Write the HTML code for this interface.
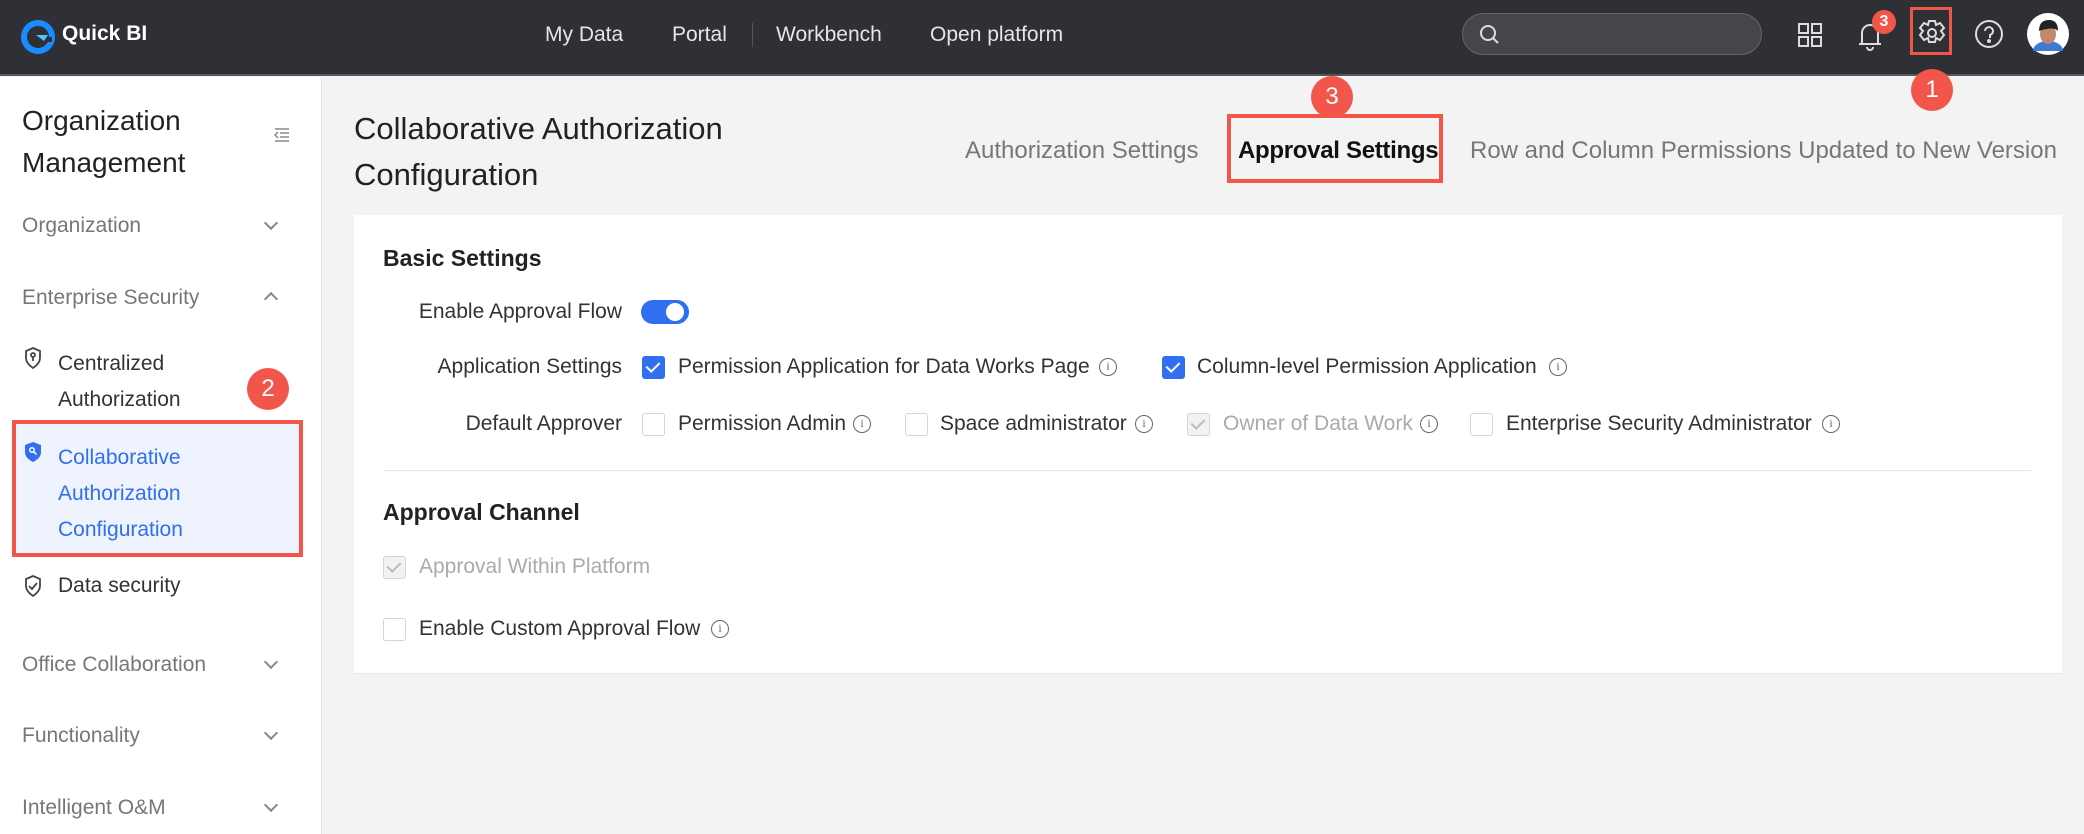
<!DOCTYPE html>
<html><head><meta charset="utf-8"><style>
*{margin:0;padding:0;box-sizing:border-box}
body{width:2084px;height:834px;overflow:hidden;background:#f3f3f3;font-family:"Liberation Sans",sans-serif;position:relative;color:#333}
.a{position:absolute;white-space:nowrap}
.hdr{position:absolute;left:0;top:0;width:2084px;height:76px;background:#2f3035;border-bottom:2px solid #55565a}
.nav{color:#e6e6e6;font-size:21px;top:23px}
.side{position:absolute;left:0;top:77px;width:322px;height:757px;background:#fff;border-right:1px solid #e2e2e2}
.si{font-size:21px;color:#777}
.sb{font-size:21px;color:#333}
.chev{width:10px;height:10px;border-right:2px solid #888;border-bottom:2px solid #888}
.badge{border-radius:50%;background:#f2564a;color:#fff;font-size:24px;text-align:center}
.f{font-size:21px;color:#333}
.cb{width:23px;height:23px;border:1.5px solid #d5d5d5;border-radius:3px;background:#fff}
.cb.on{background:#2f6ff0;border-color:#2f6ff0}
.cb.on::after,.cb.dis::after{content:"";position:absolute;left:6px;top:2px;width:6px;height:11px;border-right:2.5px solid #fff;border-bottom:2.5px solid #fff;transform:rotate(45deg)}
.cb.dis{background:#f2f2f2}
.cb.dis::after{border-color:#bbb}
.info{width:18px;height:18px;border:1.5px solid #666;border-radius:50%;font-size:12px;line-height:15px;text-align:center;color:#666;font-family:"Liberation Serif",serif}
</style></head><body>
<div class="hdr"></div>
<svg class="a" style="left:21px;top:20px" width="34" height="34" viewBox="0 0 34 34"><circle cx="17" cy="17" r="14" fill="none" stroke="#1a8cff" stroke-width="6"/><path d="M17 17h14v5h-9z" fill="#2f3035"/><path d="M15 15l12 0-4 6z" fill="#4fc3ff"/></svg>
<div class="a" style="left:62px;top:22px;color:#fff;font-size:21px;font-weight:bold">Quick BI</div>
<div class="a nav" style="left:545px">My Data</div>
<div class="a nav" style="left:672px">Portal</div>
<div class="a" style="left:752px;top:23px;width:1px;height:24px;background:#555"></div>
<div class="a nav" style="left:776px">Workbench</div>
<div class="a nav" style="left:930px">Open platform</div>
<div class="a" style="left:1462px;top:13px;width:300px;height:42px;border-radius:21px;background:#45464b;border:1px solid #666"></div>
<svg class="a" style="left:1478px;top:23px" width="24" height="24" viewBox="0 0 24 24" fill="none" stroke="#ddd" stroke-width="2"><circle cx="10" cy="10" r="7"/><path d="M15 15l5 5"/></svg>
<svg class="a" style="left:1797px;top:22px" width="26" height="26" viewBox="0 0 26 26" fill="none" stroke="#ddd" stroke-width="2"><rect x="2" y="2" width="9" height="9"/><rect x="15" y="2" width="9" height="9"/><rect x="2" y="15" width="9" height="9"/><rect x="15" y="15" width="9" height="9"/></svg>
<svg class="a" style="left:1856px;top:20px" width="28" height="32" viewBox="0 0 28 32" fill="none" stroke="#ddd" stroke-width="2"><path d="M6 24V13a8 8 0 0 1 16 0v11zM3 24h22M11 27a3 3 0 0 0 6 0"/></svg>
<div class="a badge" style="left:1872px;top:10px;width:24px;height:24px;font-size:16px;line-height:24px;font-weight:bold">3</div>
<svg class="a" style="left:1917px;top:18px" width="30" height="30" viewBox="0 0 30 30" fill="none" stroke="#ddd" stroke-width="2"><path d="M12 3h6l1 4 4-2 4 5-3 3 3 4-4 5-4-2-1 4h-6l-1-4-4 2-4-5 3-4-3-3 4-5 4 2z"/><circle cx="15" cy="15" r="4"/></svg>
<div class="a" style="left:1910px;top:7px;width:42px;height:48px;border:3px solid #f2564a"></div>
<svg class="a" style="left:1974px;top:19px" width="30" height="30" viewBox="0 0 30 30" fill="none" stroke="#ddd" stroke-width="2"><circle cx="15" cy="15" r="13"/><path d="M11 12a4 4 0 1 1 5 4v3"/><circle cx="15" cy="22" r="1" fill="#ddd"/></svg>
<svg class="a" style="left:2027px;top:13px" width="42" height="42" viewBox="0 0 42 42"><circle cx="21" cy="21" r="21" fill="#fff"/><path d="M6 38a15 10 0 0 1 30 0z" fill="#3a7bd5"/><ellipse cx="21" cy="21" rx="8" ry="10" fill="#c4876a"/><path d="M12 18q0-11 10-11 9 0 9 11-4-5-19 0z" fill="#222"/></svg>
<div class="a badge" style="left:1911px;top:69px;width:42px;height:42px;line-height:42px">1</div>

<div class="side"></div>
<div class="a" style="left:22px;top:100px;font-size:28px;color:#222;line-height:42px">Organization<br>Management</div>
<svg class="a" style="left:274px;top:128px" width="16" height="14" viewBox="0 0 16 14" stroke="#888" stroke-width="1.5"><path d="M1 1h14M6 5h9M6 9h9M1 13h14M4 4l-3 3 3 3" fill="none"/></svg>
<div class="a si" style="left:22px;top:214px">Organization</div><div class="a chev" style="left:266px;top:218px;transform:rotate(45deg)"></div>
<div class="a si" style="left:22px;top:286px">Enterprise Security</div><div class="a chev" style="left:266px;top:294px;transform:rotate(-135deg)"></div>
<svg class="a" style="left:24px;top:347px" width="18" height="22" viewBox="0 0 18 22" fill="none" stroke="#444" stroke-width="1.8"><path d="M9 1l7 3v7c0 5-4 8-7 10-3-2-7-5-7-10V4z"/><circle cx="9" cy="8" r="2"/><path d="M9 10v4"/></svg>
<div class="a sb" style="left:58px;top:346px;line-height:36px">Centralized<br>Authorization</div>
<div class="a badge" style="left:247px;top:368px;width:42px;height:42px;line-height:42px">2</div>
<div class="a" style="left:12px;top:420px;width:291px;height:137px;background:#eef3fd;border:4px solid #f2564a"></div>
<svg class="a" style="left:24px;top:441px" width="18" height="22" viewBox="0 0 18 22"><path d="M9 1l8 3v7c0 5-4 8-8 10-4-2-8-5-8-10V4z" fill="#2f6ff0"/><circle cx="8" cy="9" r="2.2" fill="none" stroke="#fff" stroke-width="1.5"/><path d="M9.5 10.5l3 3" stroke="#fff" stroke-width="1.5"/></svg>
<div class="a" style="left:58px;top:440px;line-height:36px;font-size:21px;color:#2f6ff0">Collaborative<br>Authorization<br>Configuration</div>
<svg class="a" style="left:24px;top:575px" width="18" height="22" viewBox="0 0 18 22" fill="none" stroke="#444" stroke-width="1.8"><path d="M9 1l7 3v7c0 5-4 8-7 10-3-2-7-5-7-10V4z"/><path d="M5 11l3 3 5-6"/></svg>
<div class="a sb" style="left:58px;top:574px">Data security</div>
<div class="a si" style="left:22px;top:653px">Office Collaboration</div><div class="a chev" style="left:266px;top:657px;transform:rotate(45deg)"></div>
<div class="a si" style="left:22px;top:724px">Functionality</div><div class="a chev" style="left:266px;top:728px;transform:rotate(45deg)"></div>
<div class="a si" style="left:22px;top:796px">Intelligent O&amp;M</div><div class="a chev" style="left:266px;top:800px;transform:rotate(45deg)"></div>

<div class="a" style="left:354px;top:106px;font-size:31px;color:#222;line-height:46px">Collaborative Authorization<br>Configuration</div>
<div class="a" style="left:965px;top:137px;font-size:24px;color:#777">Authorization Settings</div>
<div class="a" style="left:1238px;top:137px;font-size:24px;color:#111;font-weight:bold;letter-spacing:-0.3px">Approval Settings</div>
<div class="a" style="left:1227px;top:114px;width:216px;height:69px;border:4px solid #f2564a"></div>
<div class="a badge" style="left:1311px;top:76px;width:42px;height:42px;line-height:42px">3</div>
<div class="a" style="left:1470px;top:137px;font-size:24px;color:#777">Row and Column Permissions Updated to New Version</div>

<div class="a" style="left:354px;top:215px;width:1708px;height:459px;background:#fff;border-bottom:1px solid #e5e5e5"></div>
<div class="a" style="left:383px;top:245px;font-size:23px;font-weight:bold;color:#222">Basic Settings</div>
<div class="a f" style="right:1462px;top:300px">Enable Approval Flow</div>
<div class="a" style="left:641px;top:300px;width:48px;height:24px;border-radius:12px;background:#2f6ff0"></div>
<div class="a" style="left:666px;top:303px;width:18px;height:18px;border-radius:50%;background:#fff"></div>
<div class="a f" style="right:1462px;top:355px">Application Settings</div>
<div class="a cb on" style="left:642px;top:356px"></div><div class="a f" style="left:678px;top:355px">Permission Application for Data Works Page</div><div class="a info" style="left:1099px;top:358px">i</div>
<div class="a cb on" style="left:1162px;top:356px"></div><div class="a f" style="left:1197px;top:355px">Column-level Permission Application</div><div class="a info" style="left:1549px;top:358px">i</div>
<div class="a f" style="right:1462px;top:412px">Default Approver</div>
<div class="a cb" style="left:642px;top:413px"></div><div class="a f" style="left:678px;top:412px">Permission Admin</div><div class="a info" style="left:853px;top:415px">i</div>
<div class="a cb" style="left:905px;top:413px"></div><div class="a f" style="left:940px;top:412px">Space administrator</div><div class="a info" style="left:1135px;top:415px">i</div>
<div class="a cb dis" style="left:1187px;top:413px"></div><div class="a f" style="left:1223px;top:412px;color:#aaa">Owner of Data Work</div><div class="a info" style="left:1420px;top:415px">i</div>
<div class="a cb" style="left:1470px;top:413px"></div><div class="a f" style="left:1506px;top:412px">Enterprise Security Administrator</div><div class="a info" style="left:1822px;top:415px">i</div>
<div class="a" style="left:383px;top:470px;width:1648px;height:1px;background:#e5e5e5"></div>
<div class="a" style="left:383px;top:499px;font-size:23px;font-weight:bold;color:#222">Approval Channel</div>
<div class="a cb dis" style="left:383px;top:556px"></div><div class="a f" style="left:419px;top:555px;color:#aaa">Approval Within Platform</div>
<div class="a cb" style="left:383px;top:618px"></div><div class="a f" style="left:419px;top:617px">Enable Custom Approval Flow</div><div class="a info" style="left:711px;top:620px">i</div>
</body></html>
